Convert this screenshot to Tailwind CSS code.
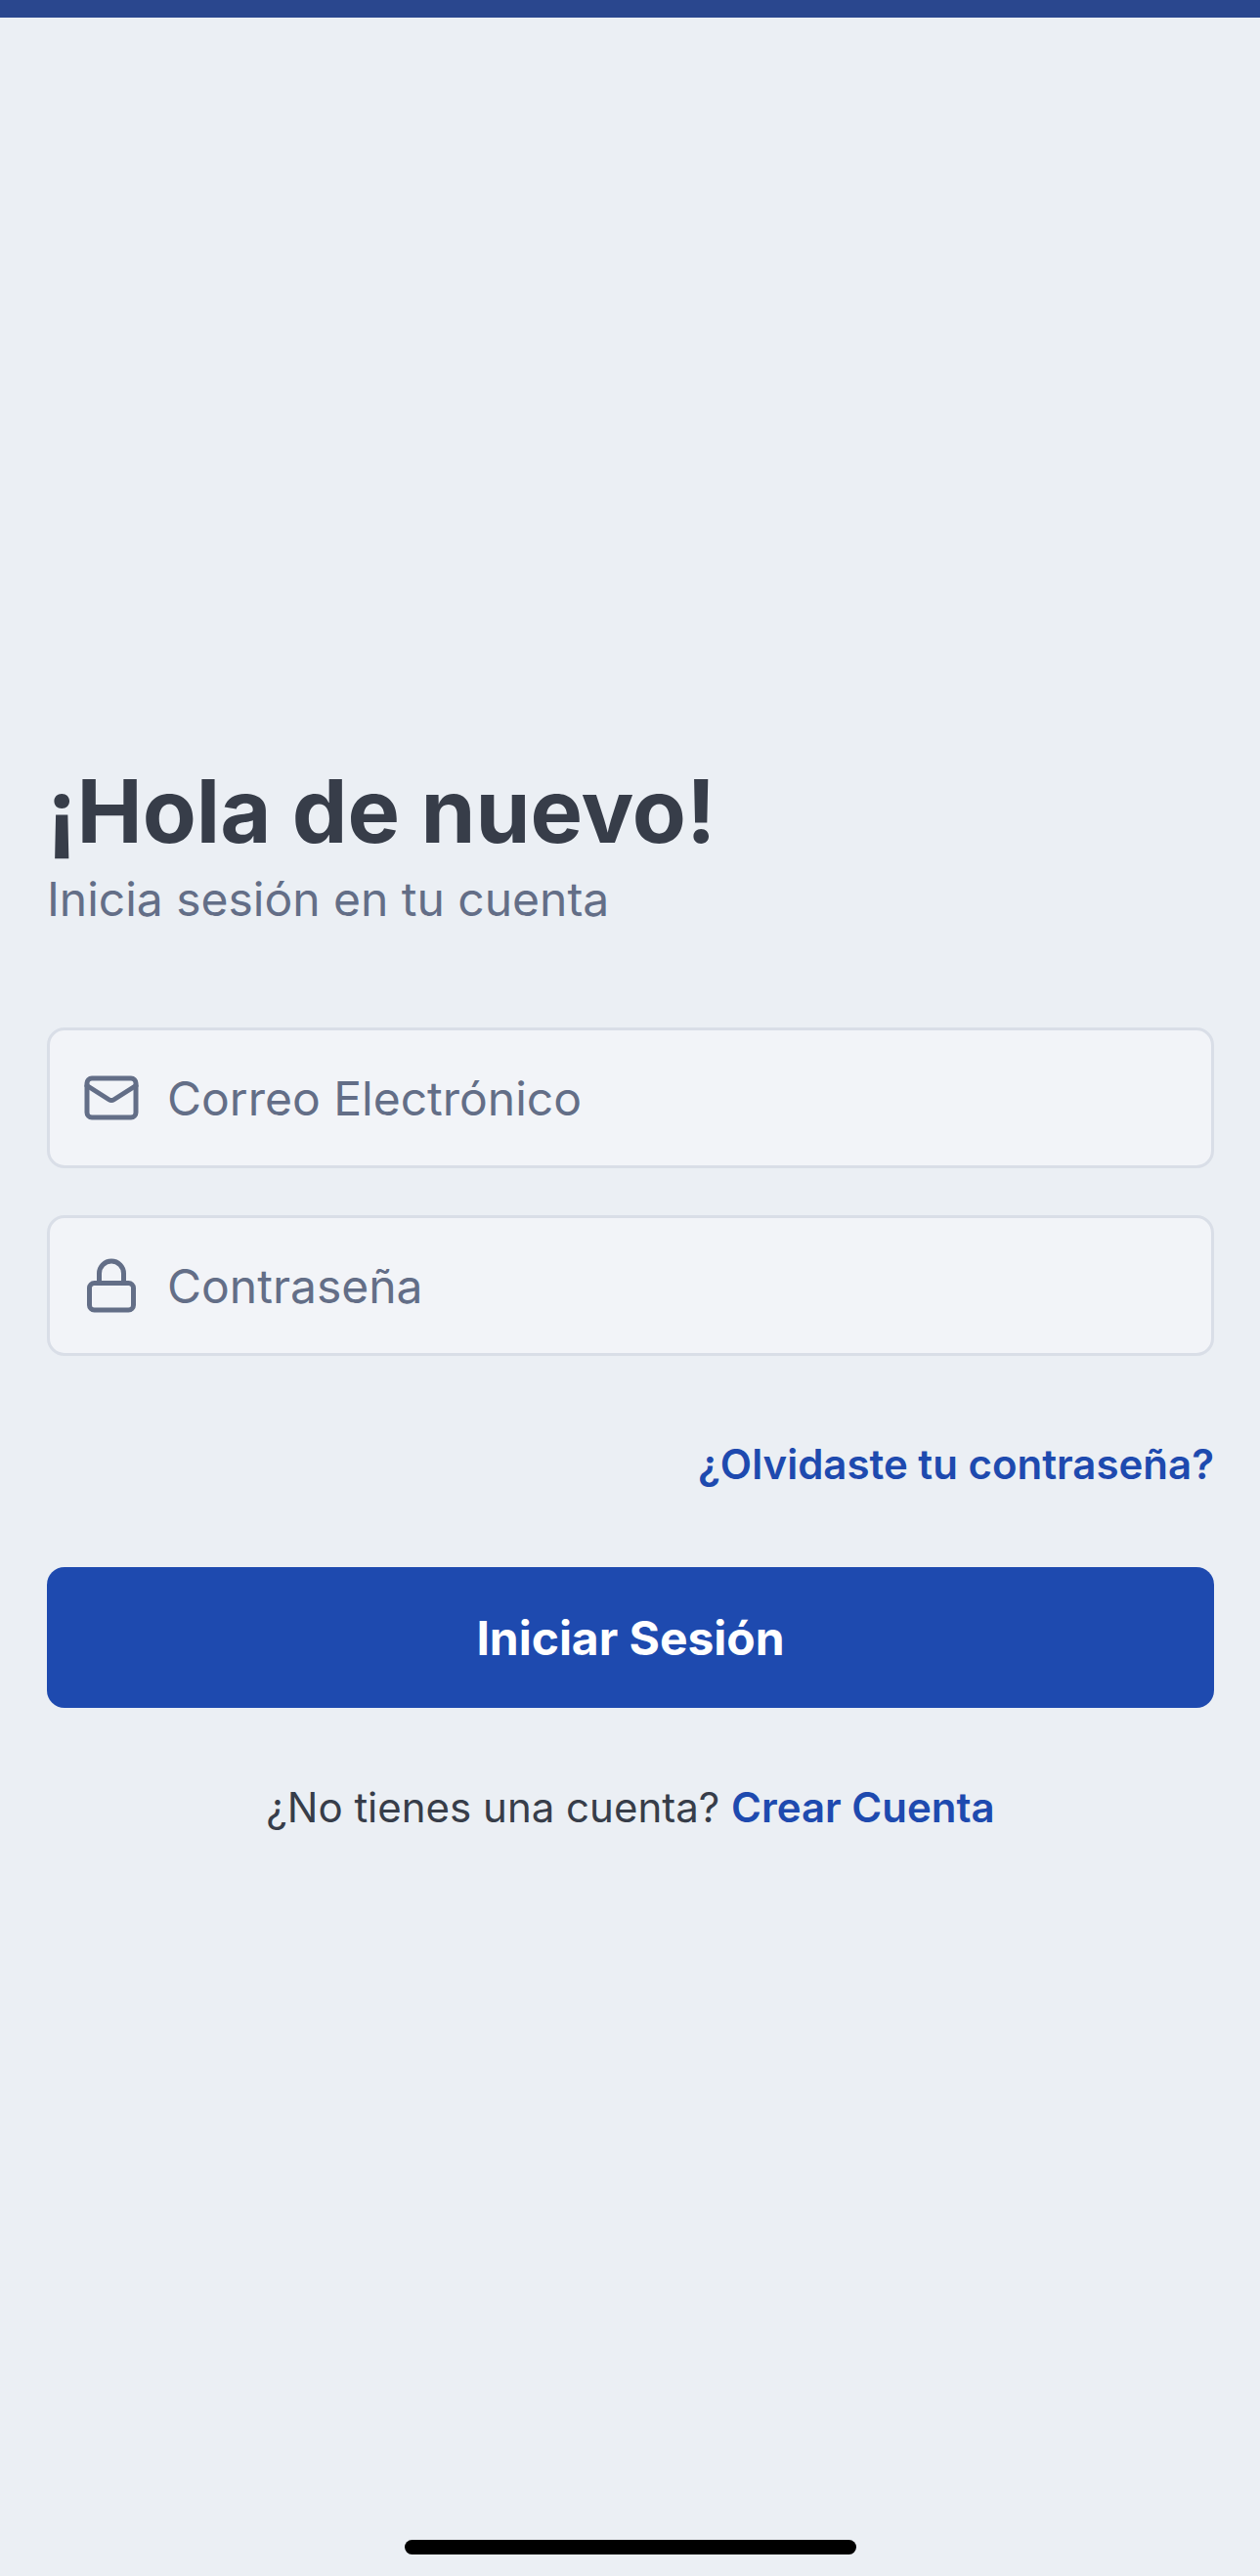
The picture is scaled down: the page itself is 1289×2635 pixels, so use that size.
<!DOCTYPE html>
<html lang="es"><head><meta charset="utf-8"><title>Iniciar Sesión</title><script src="https://cdn.jsdelivr.net/npm/@tailwindcss/browser@4"></script></head>
<body class="bg-[#ebeff4] font-['Inter',sans-serif]">
<div class="flex h-[2635px] w-[1289px] flex-col items-center">
<div class="h-[18px] w-full shrink-0 bg-[#2a478e]"></div>
<main class="flex w-full flex-col pt-[757px] pr-[47px] pl-12">
<h1 class="text-[90px] leading-[109px] font-bold text-[#373d49]">¡Hola de nuevo!</h1>
<p class="text-[48px] leading-[71px] tracking-[-0.02px] text-[#636e87]">Inicia sesión en tu cuenta</p>
<div class="mt-[96px] flex h-[144px] items-center gap-[27px] rounded-[18px] border-3 border-[#d9dee7] bg-[#f2f4f8] px-[33px] text-[48px] text-[#636e87]">
<svg class="size-[60px]" viewBox="0 0 24 24" fill="none" stroke="currentColor" stroke-width="2" stroke-linecap="round" stroke-linejoin="round"><rect x="2" y="4" width="20" height="16" rx="2"/><path d="m22 7-8.97 5.7a1.94 1.94 0 0 1-2.06 0L2 7"/></svg>
<span class="mt-px leading-[59px]">Correo Electrónico</span></div>
<div class="mt-12 flex h-[144px] items-center gap-[27px] rounded-[18px] border-3 border-[#d9dee7] bg-[#f2f4f8] px-[33px] text-[48px] text-[#636e87]">
<svg class="size-[60px]" viewBox="0 0 24 24" fill="none" stroke="currentColor" stroke-width="2" stroke-linecap="round" stroke-linejoin="round"><rect x="3" y="11" width="18" height="11" rx="2"/><path d="M7 11V7a5 5 0 0 1 10 0v4"/></svg>
<span class="mt-px leading-[59px]">Contraseña</span></div>
<a class="mt-[79px] self-end text-[42px] leading-[63px] font-semibold text-[#1e4aaf]">¿Olvidaste tu contraseña?</a>
<button class="mt-[74px] flex h-[144px] items-center justify-center rounded-[18px] bg-[#1e4aaf] text-[48px] font-bold text-white"><span class="mt-px leading-[59px] tracking-[-0.03px]">Iniciar Sesión</span></button>
<p class="mt-[70px] text-center text-[42px] leading-[63px] text-[#373d49]">¿No tienes una cuenta? <a class="font-semibold text-[#1e4aaf]">Crear Cuenta</a></p>
</main>
<div class="mt-auto mb-[22px] ml-px h-[15px] w-[462px] shrink-0 rounded-full bg-black"></div>
</div></body></html>
